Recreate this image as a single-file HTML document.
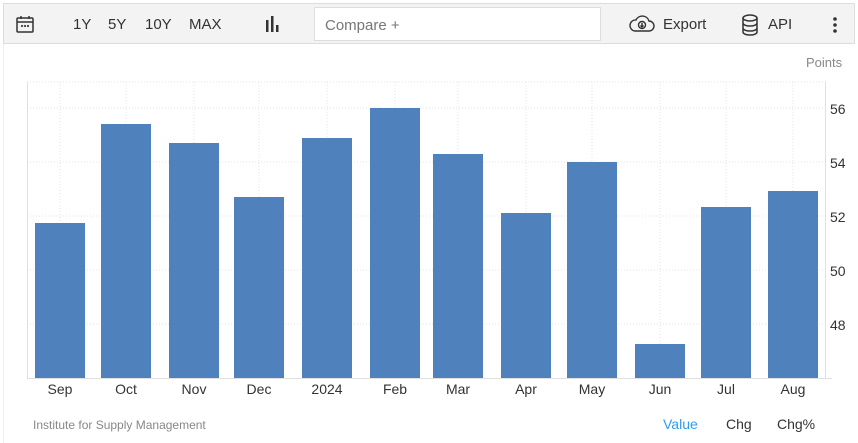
<!DOCTYPE html><html><head><style>
body{margin:0;width:858px;height:443px;background:#fff;font-family:"Liberation Sans",sans-serif;position:relative;overflow:hidden}
.tb{position:absolute;left:3px;top:3px;width:852px;height:41px;background:#f3f3f3;border:1px solid #ddd;box-sizing:border-box}
.t{position:absolute;font-size:15px;color:#333;top:16px}
.cmp{position:absolute;left:314px;top:7px;width:287px;height:34px;background:#fff;border:1px solid #ddd;box-sizing:border-box;font-size:15px;color:#777;padding:9px 10px}
.lab{position:absolute;font-size:14px;color:#333}
</style></head><body>
<div style="position:absolute;left:3px;top:43px;width:1px;height:400px;background:#eee"></div>
<div class="tb"></div>
<svg style="position:absolute;left:15px;top:15px" width="20" height="20" viewBox="0 0 20 20" fill="none" stroke="#333" stroke-width="1.5"><rect x="2" y="3" width="16" height="14" rx="1"/><line x1="2" y1="7" x2="18" y2="7"/><line x1="6" y1="1" x2="6" y2="4"/><line x1="14" y1="1" x2="14" y2="4"/><circle cx="7" cy="11" r=".4"/><circle cx="10" cy="11" r=".4"/><circle cx="13" cy="11" r=".4"/></svg>
<span class="t" style="left:73px">1Y</span><span class="t" style="left:108px">5Y</span><span class="t" style="left:145px">10Y</span><span class="t" style="left:189px">MAX</span>
<svg style="position:absolute;left:264px;top:16px" width="16" height="16"><rect x="2" y="4" width="2.5" height="12" fill="#333"/><rect x="7" y="0" width="2.5" height="16" fill="#333"/><rect x="12" y="9" width="2.5" height="7" fill="#333"/></svg>
<div class="cmp">Compare +</div>
<svg style="position:absolute;left:629px;top:15px" width="26" height="18" viewBox="0 0 26 18" fill="none" stroke="#333" stroke-width="1.4"><path d="M6 16h14a5 5 0 0 0 0-10a7 7 0 0 0-13-1a5 5 0 0 0-1 11z"/><circle cx="13" cy="10" r="3.5"/><path d="M13 8v4M11.5 10.5l1.5 1.5 1.5-1.5"/></svg>
<span class="t" style="left:663px">Export</span>
<svg style="position:absolute;left:741px;top:14px" width="18" height="22" viewBox="0 0 18 22" fill="none" stroke="#333" stroke-width="1.5"><ellipse cx="9" cy="4" rx="7" ry="3"/><path d="M2 4v14c0 1.7 3 3 7 3s7-1.3 7-3V4M2 9c0 1.7 3 3 7 3s7-1.3 7-3M2 14c0 1.7 3 3 7 3s7-1.3 7-3"/></svg>
<span class="t" style="left:768px">API</span>
<svg style="position:absolute;left:832px;top:17px" width="6" height="16"><circle cx="3" cy="2" r="1.8" fill="#333"/><circle cx="3" cy="8" r="1.8" fill="#333"/><circle cx="3" cy="14" r="1.8" fill="#333"/></svg>
<span style="position:absolute;left:806px;top:55px;font-size:13px;color:#888">Points</span>
<svg style="position:absolute;left:0;top:0" width="858" height="443">
<g stroke="#e3e3e3" stroke-dasharray="1,2">
<line x1="27" y1="82" x2="826" y2="82"/><line x1="27" y1="108" x2="826" y2="108"/><line x1="27" y1="162" x2="826" y2="162"/><line x1="27" y1="216" x2="826" y2="216"/><line x1="27" y1="270" x2="826" y2="270"/><line x1="27" y1="324" x2="826" y2="324"/>
<line x1="60" y1="82" x2="60" y2="378"/><line x1="126" y1="82" x2="126" y2="378"/><line x1="194" y1="82" x2="194" y2="378"/><line x1="259" y1="82" x2="259" y2="378"/><line x1="327" y1="82" x2="327" y2="378"/><line x1="395" y1="82" x2="395" y2="378"/><line x1="458" y1="82" x2="458" y2="378"/><line x1="526" y1="82" x2="526" y2="378"/><line x1="592" y1="82" x2="592" y2="378"/><line x1="660" y1="82" x2="660" y2="378"/><line x1="726" y1="82" x2="726" y2="378"/><line x1="793" y1="82" x2="793" y2="378"/>
</g>
<line x1="27.5" y1="82" x2="27.5" y2="378" stroke="#e0e0e0"/><line x1="825.5" y1="82" x2="825.5" y2="378" stroke="#e0e0e0"/><line x1="27" y1="378.5" x2="832" y2="378.5" stroke="#e0e0e0"/>
<g fill="#4f81bd">
<rect x="35" y="223" width="50" height="155"/><rect x="101" y="124" width="50" height="254"/><rect x="169" y="143" width="50" height="235"/><rect x="234" y="197" width="50" height="181"/><rect x="302" y="138" width="50" height="240"/><rect x="370" y="108" width="50" height="270"/><rect x="433" y="154" width="50" height="224"/><rect x="501" y="213" width="50" height="165"/><rect x="567" y="162" width="50" height="216"/><rect x="635" y="344" width="50" height="34"/><rect x="701" y="207" width="50" height="171"/><rect x="768" y="191" width="50" height="187"/>
</g>
<g font-family="Liberation Sans,sans-serif" font-size="14" fill="#333">
<text x="830" y="114">56</text><text x="830" y="168">54</text><text x="830" y="222">52</text><text x="830" y="276">50</text><text x="830" y="330">48</text>
<g text-anchor="middle"><text x="60" y="394">Sep</text><text x="126" y="394">Oct</text><text x="194" y="394">Nov</text><text x="259" y="394">Dec</text><text x="327" y="394">2024</text><text x="395" y="394">Feb</text><text x="458" y="394">Mar</text><text x="526" y="394">Apr</text><text x="592" y="394">May</text><text x="660" y="394">Jun</text><text x="726" y="394">Jul</text><text x="793" y="394">Aug</text></g>
</g>
</svg>
<span style="position:absolute;left:33px;top:418px;font-size:12px;color:#888">Institute for Supply Management</span>
<span class="lab" style="left:663px;top:416px;color:#2d9cf5">Value</span><span class="lab" style="left:726px;top:416px">Chg</span><span class="lab" style="left:777px;top:416px">Chg%</span>
</body></html>
